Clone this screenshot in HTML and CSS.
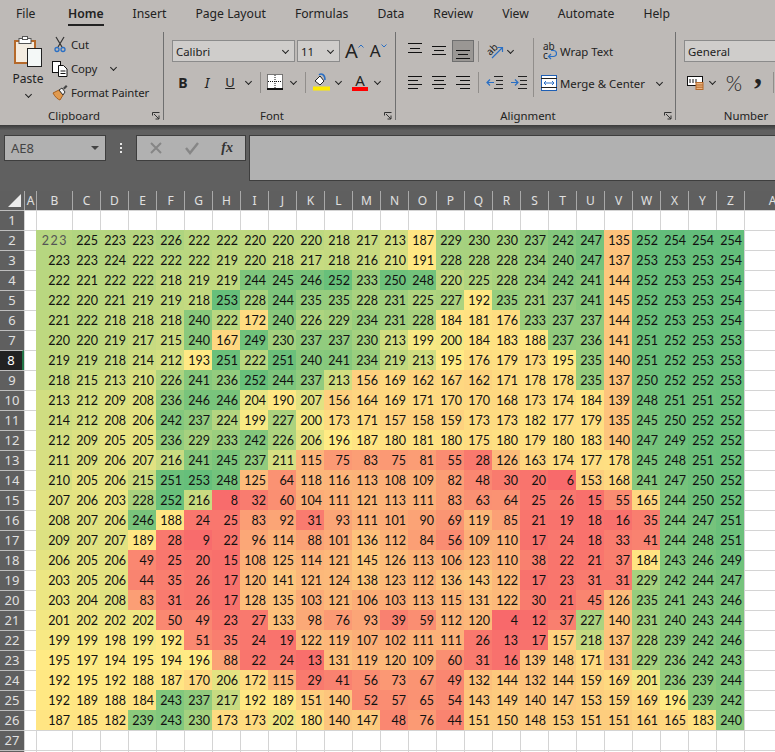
FILE: index.html
```html
<!DOCTYPE html>
<html lang="en">
  <head>
    <meta charset="UTF-8" />
    <meta name="viewport" content="width=device-width, initial-scale=1.0" />
    <title>Book1 - Excel</title>
    <link rel="stylesheet" href="styles.css">
  </head>
  <body>
    <nav class="tabs">
      <span class="tab">File</span>
      <span class="tab active">Home</span>
      <span class="tab">Insert</span>
      <span class="tab">Page Layout</span>
      <span class="tab">Formulas</span>
      <span class="tab">Data</span>
      <span class="tab">Review</span>
      <span class="tab">View</span>
      <span class="tab">Automate</span>
      <span class="tab">Help</span>
    </nav>

    <div class="ribbon">
      <section class="group group-clipboard">
        <div class="group-body clipboard-body">
          <div class="paste">
            <svg width="28" height="31" viewBox="0 0 28 31">
              <rect x="1" y="5" width="20" height="22" fill="#f4ece0" stroke="#b5692a" stroke-width="2" />
              <rect x="5" y="2.500" width="12" height="5" fill="#fff" stroke="#555" />
              <rect x="8.500" y="0.500" width="5" height="3" fill="#fff" stroke="#555" />
              <rect x="13.500" y="12.500" width="14" height="18" fill="#f4f8f7" stroke="#222" />
            </svg>
            <span class="paste-label">Paste</span>
            <i class="chev"></i>
          </div>
          <div class="clip-tools">
            <div class="clip-tool">
              <svg width="16" height="17" viewBox="0 0 16 17">
                <path d="M4 1l6 10M12 1L6 11" fill="none" stroke="#333" stroke-width="1.200" />
                <circle cx="5" cy="13.500" r="2" fill="none" stroke="#2a6fc4" stroke-width="1.300" />
                <circle cx="11" cy="13.500" r="2" fill="none" stroke="#2a6fc4" stroke-width="1.300" />
              </svg>
              <span>Cut</span>
            </div>
            <div class="clip-tool">
              <svg width="16" height="17" viewBox="0 0 16 17">
                <rect x="0.500" y="1.500" width="8" height="11" fill="#fff" stroke="#111" />
                <path d="M6.500 5.500h5l3.500 3.500v7.500h-8.500z" fill="#fff" stroke="#111" />
                <path d="M8.500 11h5M8.500 13.500h5" stroke="#111" />
              </svg>
              <span>Copy</span>
              <i class="chev chev-copy"></i>
            </div>
            <div class="clip-tool">
              <svg width="16" height="17" viewBox="0 0 16 17">
                <path d="M1 9l6-3 4 5-3 5c-2-.5-5-3-7-7z" fill="#e09a4f" stroke="#a85f1d" />
                <path d="M7 6l3-2 3 4-2 3z" fill="#f2f2f2" stroke="#333" />
                <path d="M11 4l3-3 1.500 1.500-3 3z" fill="#444" />
              </svg>
              <span>Format Painter</span>
            </div>
          </div>
        </div>
        <div class="group-foot">
          <span class="group-label">Clipboard</span>
          <svg class="launcher" width="8" height="8" viewBox="0 0 8 8">
            <path d="M.5 3.500v-3h7M2 2l5 5M7 3.500V7H3.500" fill="none" stroke="#333" />
          </svg>
        </div>
      </section>

      <section class="group group-font">
        <div class="group-body">
          <div class="tool-row">
            <div class="combo combo-font">
              <span>Calibri</span>
              <i class="chev"></i>
            </div>
            <div class="combo combo-size">
              <span>11</span>
              <i class="chev"></i>
            </div>
            <span class="size-btn grow">A<svg width="6" height="4" viewBox="0 0 6 4"><path d="M.5 3.500L3 1l2.500 2.500" fill="none" stroke="#2a6fc4" /></svg></span>
            <span class="size-btn shrink">A<svg width="6" height="4" viewBox="0 0 6 4"><path d="M.5.500L3 3 5.500.500" fill="none" stroke="#2a6fc4" /></svg></span>
          </div>
          <div class="tool-row second">
            <span class="btn w22 fmt-b">B</span>
            <span class="btn w26 fmt-i">I</span>
            <span class="btn w20 fmt-u">U</span>
            <span class="btn w16"><i class="chev"></i></span>
            <span class="sep"></span>
            <span class="btn w20">
              <svg width="16" height="16" viewBox="0 0 16 16">
                <rect width="15" height="14" x=".5" y=".5" fill="#fff" stroke="#111" stroke-dasharray="1 1" />
                <path d="M8 1v13M1 7.500h14" stroke="#111" stroke-dasharray="1 1" />
                <path d="M0 15h16" stroke="#111" stroke-width="2" />
              </svg>
            </span>
            <span class="btn w16"><i class="chev"></i></span>
            <span class="sep"></span>
            <span class="btn w22">
              <svg width="17" height="18" viewBox="0 0 17 18">
                <path d="M2 8l5-5 4 5-4 4z" fill="#fff" stroke="#222" />
                <path d="M6 2c2-2 6-1 6 5" fill="none" stroke="#2a6fc4" stroke-width="1.500" />
                <rect y="13.500" width="17" height="4" fill="#ffeb00" />
              </svg>
            </span>
            <span class="btn w12"><i class="chev"></i></span>
            <span class="btn w22 font-colour">
              <span>A</span>
              <b></b>
            </span>
            <span class="btn w12"><i class="chev"></i></span>
          </div>
        </div>
        <div class="group-foot">
          <span class="group-label">Font</span>
          <svg class="launcher" width="8" height="8" viewBox="0 0 8 8">
            <path d="M.5 3.500v-3h7M2 2l5 5M7 3.500V7H3.500" fill="none" stroke="#333" />
          </svg>
        </div>
      </section>

      <section class="group group-align">
        <div class="group-body align-body">
          <div class="align-left">
            <div class="tool-row">
              <span class="btn w22">
                <svg width="22" height="22" viewBox="0 0 22 22"><path d="M4 3.500h14M6 8.500h10M4 12.500h14" stroke="#111" /></svg>
              </span>
              <span class="btn w22">
                <svg width="22" height="22" viewBox="0 0 22 22"><path d="M4 6.500h14M6 10.500h10M4 14.500h14" stroke="#111" /></svg>
              </span>
              <span class="btn w22 pressed">
                <svg width="20" height="20" viewBox="0 0 20 20"><path d="M3 9.500h14M5 13.500h10M3 17.500h14" stroke="#111" /></svg>
              </span>
              <span class="sep"></span>
              <span class="btn w22">
                <svg class="orient" width="20" height="20" viewBox="0 0 20 20">
                  <text class="orient-text" x="2" y="13" transform="rotate(-45 6 10)">ab</text>
                  <path d="M7 17L17 7M12.500 6.500H17.500V11" fill="none" stroke="#2a6fc4" stroke-width="1.200" />
                </svg>
              </span>
              <span class="btn w8"><i class="chev"></i></span>
            </div>
            <div class="tool-row second">
              <span class="btn w22">
                <svg width="22" height="22" viewBox="0 0 22 22"><path d="M4 5.500h14M4 9.500h10M4 13.500h14M4 17.500h10" stroke="#111" /></svg>
              </span>
              <span class="btn w22">
                <svg width="22" height="22" viewBox="0 0 22 22"><path d="M4 5.500h14M6 9.500h10M4 13.500h14M6 17.500h10" stroke="#111" /></svg>
              </span>
              <span class="btn w22">
                <svg width="22" height="22" viewBox="0 0 22 22"><path d="M4 5.500h14M8 9.500h10M4 13.500h14M8 17.500h10" stroke="#111" /></svg>
              </span>
              <span class="sep"></span>
              <span class="btn w22">
                <svg width="22" height="22" viewBox="0 0 22 22">
                  <path d="M10 5.500h9M12 9.500h7M12 13.500h7M10 17.500h9" stroke="#222" />
                  <path d="M3 11.500h7M6 8.500l-3 3 3 3" fill="none" stroke="#2a6fc4" stroke-width="1.200" />
                </svg>
              </span>
              <span class="btn w22">
                <svg width="22" height="22" viewBox="0 0 22 22">
                  <path d="M10 5.500h9M12 9.500h7M12 13.500h7M10 17.500h9" stroke="#222" />
                  <path d="M3 11.500h7M7 8.500l3 3-3 3" fill="none" stroke="#2a6fc4" stroke-width="1.200" />
                </svg>
              </span>
            </div>
          </div>
          <span class="sep sep-tall"></span>
          <div class="align-right">
            <div class="text-tool">
              <svg width="16" height="20" viewBox="0 0 16 20">
                <text class="wrap-text" x="2" y="9">ab</text>
                <text class="wrap-text" x="2" y="18">c</text>
                <path d="M10 9.500h2.500a3 3 0 0 1 0 6H8M10 13l-2.500 2.500L10 18" fill="none" stroke="#2a6fc4" stroke-width="1.200" />
              </svg>
              <span>Wrap Text</span>
            </div>
            <div class="text-tool">
              <svg width="16" height="16" viewBox="0 0 16 16">
                <rect x=".5" y=".5" width="15" height="15" fill="#fff" stroke="#1f5fb4" />
                <path d="M0 3.500h16M0 12.500h16" stroke="#222" />
                <path d="M3 8h10M5 6L3 8l2 2M11 6l2 2-2 2" fill="none" stroke="#2a6fc4" />
              </svg>
              <span>Merge &amp; Center</span>
              <i class="chev chev-merge"></i>
            </div>
          </div>
        </div>
        <div class="group-foot">
          <span class="group-label">Alignment</span>
          <svg class="launcher" width="8" height="8" viewBox="0 0 8 8">
            <path d="M.5 3.500v-3h7M2 2l5 5M7 3.500V7H3.500" fill="none" stroke="#333" />
          </svg>
        </div>
      </section>

      <section class="group group-number">
        <div class="group-body">
          <div class="tool-row">
            <div class="combo combo-number"><span>General</span></div>
          </div>
          <div class="tool-row second">
            <span class="btn w22">
              <svg width="17" height="16" viewBox="0 0 17 16">
                <rect x=".5" y="2.500" width="15" height="9" fill="#fff" stroke="#111" />
                <path d="M3 5v4M6 5v4M9 5v4" stroke="#111" />
                <rect x="9" y="8.500" width="7" height="7" fill="#e9b480" stroke="#b5692a" />
                <path d="M9 11h7M9 13.200h7" stroke="#b5692a" />
              </svg>
            </span>
            <span class="btn w12"><i class="chev"></i></span>
            <span class="btn w26 percent">%</span>
            <span class="btn w22 comma">,</span>
            <span class="sep"></span>
          </div>
        </div>
        <div class="group-foot">
          <span class="group-label">Number</span>
        </div>
      </section>
    </div>
    <div class="ribbon-shadow"></div>

    <div class="formula-bar">
      <div class="name-box">
        <span>AE8</span>
        <i class="caret"></i>
      </div>
      <div class="kebab"><i></i><i></i><i></i></div>
      <div class="func-box">
        <svg width="14" height="14" viewBox="0 0 14 14"><path d="M2 2l10 10M12 2L2 12" stroke="#868686" stroke-width="2" /></svg>
        <svg width="16" height="14" viewBox="0 0 16 14"><path d="M2 7l4 5 8-10" fill="none" stroke="#868686" stroke-width="2.400" /></svg>
        <span class="fx">fx</span>
      </div>
      <div class="formula-input"></div>
    </div>

    <div class="sheet" id="sheet"></div>

    <script src="script.js"></script>
  </body>
</html>
```

FILE: styles.css
```css
html,
body {
  height: 752px;
  overflow: hidden;
}
body {
  margin: 0;
  background-color: #606060;
  font-family: "Noto Sans", Arial, sans-serif;
  font-size: 11.4px;
  color: #222;
}

/* tabs */
.tabs {
  display: flex;
  gap: 29px;
  height: 28px;
  padding-left: 16px;
  background-color: #bebab7;
  font-size: 12.2px;
  white-space: nowrap;
}
.tab {
  height: 25px;
  line-height: 27px;
}
.tab:first-child {
  margin-right: 3.5px;
}
.tab.active {
  height: 24px;
  font-weight: 600;
  border-bottom: 2px solid #222;
}

/* ribbon */
.ribbon {
  display: flex;
  height: 97px;
  padding-top: 4px;
  box-sizing: border-box;
  background-color: #bebab7;
  overflow: hidden;
  white-space: nowrap;
}
.ribbon-shadow {
  height: 5px;
  background: linear-gradient(#3a3a3a, #5c5c5c);
}
.group {
  display: flex;
  flex-direction: column;
  box-sizing: border-box;
  flex-shrink: 0;
  height: 88px;
  border-right: 1px solid #6f6f6f;
}
.group-clipboard {
  width: 164px;
}
.group-font {
  width: 232px;
}
.group-align {
  width: 280px;
}
.group-number {
  width: 140px;
  border-right: 0;
}
.group-body {
  flex-shrink: 0;
  height: 74px;
  padding: 8px 0 0 8px;
  box-sizing: border-box;
}
.group-foot {
  display: flex;
  flex-shrink: 0;
  align-items: center;
  height: 14px;
  padding-top: 3px;
  line-height: 14px;
}
.group-label {
  flex: 1;
  text-align: center;
}
.launcher {
  margin: 0 3px 0 4px;
}
.tool-row {
  display: flex;
  align-items: center;
  height: 22px;
}
.tool-row.second {
  margin-top: 9px;
}
.btn {
  display: flex;
  align-items: center;
  justify-content: center;
  flex-shrink: 0;
  height: 22px;
  box-sizing: border-box;
}
.w8 { width: 8px; }
.w12 { width: 12px; }
.w16 { width: 16px; }
.w20 { width: 20px; }
.w22 { width: 22px; }
.w26 { width: 26px; }
.sep {
  flex-shrink: 0;
  width: 1px;
  height: 21px;
  margin: 0 4px;
  background-color: #918e8b;
}
.chev {
  display: block;
  flex-shrink: 0;
  width: 4px;
  height: 4px;
  margin-top: -2px;
  border-right: 1px solid #222;
  border-bottom: 1px solid #222;
  transform: rotate(45deg);
}

/* clipboard */
.clipboard-body {
  display: flex;
  padding: 0 0 0 13px;
}
.paste {
  display: flex;
  flex-direction: column;
  align-items: center;
  width: 30px;
  padding-top: 4px;
}
.paste-label {
  margin-top: 3px;
  font-size: 12px;
  line-height: 17px;
}
.paste .chev {
  margin-top: 5px;
}
.clip-tools {
  margin-left: 9px;
}
.clip-tool {
  display: flex;
  align-items: center;
  gap: 3px;
  height: 24px;
  letter-spacing: -0.15px;
}
.chev-copy {
  margin-left: 11px;
}

/* font */
.combo {
  display: flex;
  align-items: center;
  justify-content: space-between;
  box-sizing: border-box;
  height: 22px;
  padding: 0 6px 0 3px;
  background-color: #cfcdcb;
  border: 1px solid #8b8b8b;
}
.combo-font {
  width: 123px;
}
.combo-size {
  width: 43px;
  margin-left: 2px;
}
.combo-number {
  width: 120px;
}
.size-btn {
  display: flex;
  align-items: flex-start;
  font-size: 20px;
  line-height: 22px;
}
.grow {
  margin-left: 5px;
}
.shrink {
  margin-left: 6px;
  font-size: 17px;
}
.size-btn svg {
  margin-top: 4px;
}
.fmt-b {
  font-size: 14px;
  font-weight: 700;
}
.fmt-i {
  font-size: 14px;
  font-style: italic;
}
.fmt-u {
  font-size: 13px;
  text-decoration: underline;
}
.font-colour {
  flex-direction: column;
  margin-left: 5px;
  font-size: 15px;
  line-height: 14px;
}
.font-colour b {
  display: block;
  width: 16px;
  height: 4px;
  background-color: #f00;
}

/* alignment */
.align-body {
  display: flex;
  align-items: flex-start;
}
.align-left .tool-row {
  gap: 2px;
}
.align-left .sep {
  margin: 0 3px 0 2px;
}
.align-left .btn.w8 {
  margin-left: -2px;
}
.pressed {
  background-color: #9a9794;
  border: 1px solid #6f6f6f;
}
.orient {
  overflow: visible;
}
.sep-tall {
  height: 59px;
  margin: -2px 0 0 3px;
}
.orient-text,
.wrap-text {
  font-family: "Noto Sans", Arial, sans-serif;
  font-size: 10px;
  fill: #222;
}
.align-right {
  margin-left: 7px;
}
.text-tool {
  display: flex;
  align-items: center;
  gap: 3px;
  height: 22px;
}
.text-tool + .text-tool {
  margin-top: 10px;
}
.chev-merge {
  margin-left: 9px;
}

/* number */
.percent {
  margin-left: 3px;
  font-family: Lato, sans-serif;
  font-size: 21px;
  font-weight: 300;
}
.comma {
  padding-bottom: 18px;
  font-family: "Liberation Serif", serif;
  font-size: 32px;
  font-weight: 700;
  line-height: 22px;
}

/* formula bar */
.formula-bar {
  display: flex;
  align-items: flex-start;
  box-sizing: border-box;
  height: 61px;
  padding: 5px 0 0 4px;
}
.name-box {
  display: flex;
  align-items: center;
  justify-content: space-between;
  box-sizing: border-box;
  width: 102px;
  height: 26px;
  padding: 0 6px;
  background-color: #b1b1b1;
  border: 1px solid #3e3e3e;
  color: #444;
  font-size: 13px;
}
.caret {
  width: 0;
  height: 0;
  border-left: 4px solid transparent;
  border-right: 4px solid transparent;
  border-top: 4px solid #444;
}
.kebab {
  display: flex;
  flex-direction: column;
  align-items: center;
  gap: 2px;
  width: 30px;
  padding-top: 8px;
}
.kebab i {
  width: 2px;
  height: 2px;
  background-color: #e6e6e6;
}
.func-box {
  display: flex;
  align-items: center;
  justify-content: space-between;
  box-sizing: border-box;
  width: 110px;
  height: 26px;
  padding: 0 12px;
  background-color: #b1b1b1;
  border: 1px solid #3e3e3e;
}
.fx {
  font-family: "Liberation Serif", serif;
  font-size: 14px;
  font-style: italic;
  font-weight: 700;
  color: #333;
}
.formula-input {
  flex: 1;
  height: 46px;
  margin-left: 3px;
  background-color: #b1b1b1;
  border: 1px solid #3e3e3e;
  border-right: 0;
  box-sizing: border-box;
}

/* sheet */
.sheet {
  display: grid;
  grid-template-columns: 24px 12px 36px repeat(24, 28px) 64px;
  grid-template-rows: 19px repeat(27, 20px) 2px;
  width: 808px;
  background-color: #fff;
  font-size: 12px;
  overflow: hidden;
}
.corner,
.col-head,
.row-head {
  display: flex;
  align-items: center;
  justify-content: center;
  background-color: #5f5f5f;
  color: #e0e0e0;
  line-height: 1;
}
.corner {
  justify-content: flex-end;
  padding-right: 3px;
  box-sizing: border-box;
}
.col-head {
  border-left: 1px solid #a9a9a9;
  box-sizing: border-box;
}
.row-head {
  border-top: 1px solid #bdbdbd;
  box-sizing: border-box;
  font-size: 13px;
}
.row-head.selected {
  background-color: #222;
  color: #fff;
  border-right: 2px solid #217346;
}
.cell {
  box-sizing: border-box;
  border-top: 1px solid #d4d4d4;
  border-left: 1px solid #d4d4d4;
}
.cell.value {
  padding: 2px 2px 0 0;
  border: 0;
  font-family: Lato, "Liberation Sans", sans-serif;
  font-size: 12.5px;
  line-height: 18px;
  text-align: right;
  color: #111;
}
.cell.first {
  padding-right: 4px;
  letter-spacing: 1.500px;
  color: #555;
}
```

FILE: script.js
```js
const rows = [
  [223, 225, 223, 223, 226, 222, 222, 220, 220, 220, 218, 217, 213, 187, 229, 230, 230, 237, 242, 247, 135, 252, 254, 254, 254],
  [223, 223, 224, 222, 222, 222, 219, 220, 218, 217, 218, 216, 210, 191, 228, 228, 228, 234, 240, 247, 137, 253, 253, 253, 254],
  [222, 221, 222, 222, 218, 219, 219, 244, 245, 246, 252, 233, 250, 248, 220, 225, 228, 234, 242, 241, 144, 252, 253, 253, 254],
  [222, 220, 221, 219, 219, 218, 253, 228, 244, 235, 235, 228, 231, 225, 227, 192, 235, 231, 237, 241, 145, 252, 253, 253, 254],
  [221, 222, 218, 218, 218, 240, 222, 172, 240, 226, 229, 234, 231, 228, 184, 181, 176, 233, 237, 237, 144, 252, 253, 253, 254],
  [220, 220, 219, 217, 215, 240, 167, 249, 230, 237, 237, 230, 213, 199, 200, 184, 183, 188, 237, 236, 141, 251, 252, 253, 253],
  [219, 219, 218, 214, 212, 193, 251, 222, 251, 240, 241, 234, 219, 213, 195, 176, 179, 173, 195, 235, 140, 251, 252, 253, 253],
  [218, 215, 213, 210, 226, 241, 236, 252, 244, 237, 213, 156, 169, 162, 167, 162, 171, 178, 178, 235, 137, 250, 252, 252, 253],
  [213, 212, 209, 208, 236, 246, 246, 204, 190, 207, 156, 164, 169, 171, 170, 170, 168, 173, 174, 184, 139, 248, 251, 251, 252],
  [214, 212, 208, 206, 242, 237, 224, 199, 227, 200, 173, 171, 157, 158, 159, 173, 173, 182, 177, 179, 135, 245, 250, 252, 252],
  [212, 209, 205, 205, 236, 229, 233, 242, 226, 206, 196, 187, 180, 181, 180, 175, 180, 179, 180, 183, 140, 247, 249, 252, 252],
  [211, 209, 206, 207, 216, 241, 245, 237, 211, 115, 75, 83, 75, 81, 55, 28, 126, 163, 174, 177, 178, 245, 248, 251, 252],
  [210, 205, 206, 215, 251, 253, 248, 125, 64, 118, 116, 113, 108, 109, 82, 48, 30, 20, 6, 153, 168, 241, 247, 250, 252],
  [207, 206, 203, 228, 252, 216, 8, 32, 60, 104, 111, 121, 113, 111, 83, 63, 64, 25, 26, 15, 55, 165, 244, 250, 252],
  [208, 207, 206, 246, 188, 24, 25, 83, 92, 31, 93, 111, 101, 90, 69, 119, 85, 21, 19, 18, 16, 35, 244, 247, 251],
  [209, 207, 207, 189, 28, 9, 22, 96, 114, 88, 101, 136, 112, 84, 56, 109, 110, 17, 24, 18, 33, 41, 244, 248, 251],
  [206, 205, 206, 49, 25, 20, 15, 108, 125, 114, 121, 145, 126, 113, 106, 123, 110, 38, 22, 21, 37, 184, 243, 246, 249],
  [203, 205, 206, 44, 35, 26, 17, 120, 141, 121, 124, 138, 123, 112, 136, 143, 122, 17, 23, 31, 31, 229, 242, 244, 247],
  [203, 204, 208, 83, 31, 26, 17, 128, 135, 103, 121, 106, 103, 113, 115, 131, 122, 30, 21, 45, 126, 235, 241, 243, 246],
  [201, 202, 202, 202, 50, 49, 23, 27, 133, 98, 76, 93, 39, 59, 112, 120, 4, 12, 37, 227, 140, 231, 240, 243, 244],
  [199, 199, 198, 199, 192, 51, 35, 24, 19, 122, 119, 107, 102, 111, 111, 26, 13, 17, 157, 218, 137, 228, 239, 242, 246],
  [195, 197, 194, 195, 194, 196, 88, 22, 24, 13, 131, 119, 120, 109, 60, 31, 16, 139, 148, 171, 131, 229, 236, 242, 243],
  [192, 195, 192, 188, 187, 170, 206, 172, 115, 29, 41, 56, 73, 67, 49, 132, 144, 132, 144, 159, 169, 201, 236, 239, 244],
  [192, 189, 188, 184, 243, 237, 217, 192, 189, 151, 140, 52, 57, 65, 54, 143, 149, 140, 147, 153, 159, 169, 196, 239, 242],
  [187, 185, 182, 239, 243, 230, 173, 173, 202, 180, 140, 147, 48, 76, 44, 151, 150, 148, 153, 151, 151, 161, 165, 183, 240],
];

const columns = "A B C D E F G H I J K L M N O P Q R S T U V W X Y Z AA".split(" ");
const sheet = document.getElementById("sheet");

// three colour scale: min red, midpoint yellow, max green
const RED = [248, 105, 107];
const YELLOW = [255, 235, 132];
const GREEN = [99, 190, 123];
const min = 4;
const mid = 196;
const max = 254;

function mix(a, b, t) {
  return a.map((v, i) => Math.round(v + (b[i] - v) * t));
}

function scaleColour(n) {
  const rgb = n < mid ? mix(RED, YELLOW, (n - min) / (mid - min)) : mix(YELLOW, GREEN, (n - mid) / (max - mid));
  return `rgb(${rgb.join(", ")})`;
}

function add(className, text) {
  const el = document.createElement("div");
  el.className = className;
  if (text !== undefined) el.textContent = text;
  sheet.appendChild(el);
  return el;
}

const corner = add("corner");
corner.innerHTML = '<svg width="13" height="13" viewBox="0 0 13 13"><path d="M13 0v13H0z" fill="#ececec" /></svg>';
columns.forEach((c) => add("col-head", c));

for (let r = 1; r <= 28; r++) {
  add(r === 8 ? "row-head selected" : "row-head", r === 28 ? "" : r);
  const values = rows[r - 2];
  add("cell"); // column A stays empty
  for (let c = 0; c < 25; c++) {
    if (values) {
      const isFirst = r === 2 && c === 0;
      const el = add(isFirst ? "cell value first" : "cell value", values[c]);
      el.style.backgroundColor = scaleColour(values[c]);
    } else {
      add("cell");
    }
  }
  add("cell"); // column AA
}
```
